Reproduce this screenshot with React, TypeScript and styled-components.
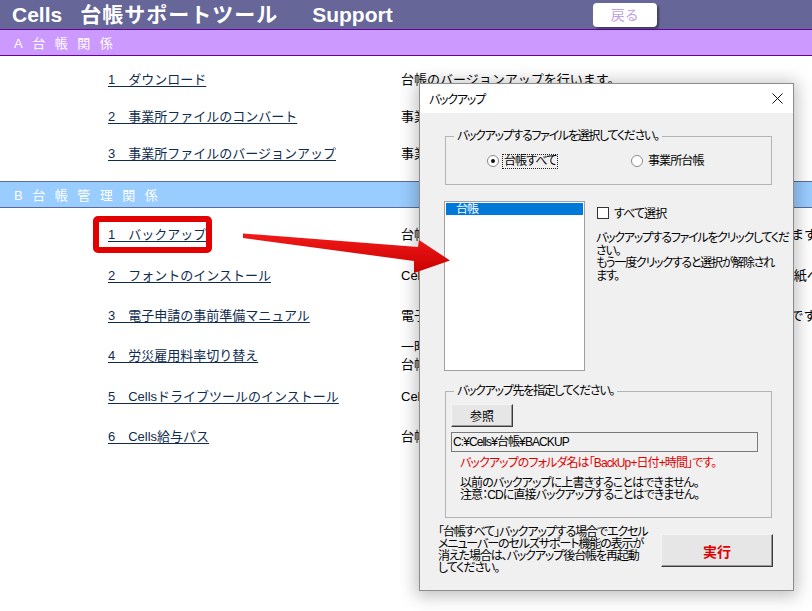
import React from "react";
import styled, { createGlobalStyle, css } from "styled-components";

const UI = `"Liberation Sans", "Noto Sans CJK JP", sans-serif`;

const GlobalStyle = createGlobalStyle`
  html, body { margin: 0; padding: 0; background: #fff; }
  body { width: 812px; height: 611px; overflow: hidden; }
  #root { width: 812px; height: 611px; }
`;

const Page = styled.div`
  position: relative;
  width: 812px;
  height: 611px;
  overflow: hidden;
  background: #fff;
  font-family: ${UI};
`;

const Header = styled.header`
  height: 29px;
  box-sizing: border-box;
  background: #666699;
  display: flex;
  align-items: center;
  padding-left: 12px;
  color: #fff;
  font-weight: bold;
  font-size: 21px;
  line-height: 31px;
`;

const Brand = styled.span``;
const TitleJa = styled.span`
  margin-left: 18px;
  letter-spacing: 1px;
`;
const TitleEn = styled.span`
  margin-left: 34px;
`;

const BackButton = styled.button`
  margin-left: 200px;
  width: 64px;
  height: 24px;
  padding: 0;
  background: #fff;
  border: none;
  border-radius: 4px;
  box-shadow: 2px 2px 2px rgba(40, 40, 70, 0.65);
  color: #c0a2e6;
  font-family: ${UI};
  font-size: 14px;
  font-weight: normal;
  line-height: 24px;
`;

const SectionBar = styled.div<{ $tone: "a" | "b" }>`
  height: 27px;
  box-sizing: border-box;
  display: flex;
  align-items: center;
  padding-left: 14px;
  background: ${(p) => (p.$tone === "a" ? "#cc99ff" : "#99ccff")};
  border-top: 1px solid ${(p) => (p.$tone === "a" ? "#660099" : "#5f6a94")};
  border-bottom: 1px solid ${(p) => (p.$tone === "a" ? "#660099" : "#5f6a94")};
  color: #fff;
  font-size: 13px;
  letter-spacing: 9.5px;
`;

const List = styled.ul<{ $row: number; $top: number; $bottom: number }>`
  list-style: none;
  margin: 0;
  padding: ${(p) => p.$top}px 0 ${(p) => p.$bottom}px 108px;
  display: grid;
  grid-auto-rows: ${(p) => p.$row}px;
`;

const Row = styled.li`
  display: grid;
  grid-template-columns: 293px auto;
  align-items: center;
  white-space: nowrap;
`;

const MenuLink = styled.a<{ $marked?: boolean }>`
  position: relative;
  justify-self: start;
  color: #0f2c4e;
  text-decoration: underline;
  text-underline-offset: 2px;
  font-size: 13px;
  line-height: 18px;
  cursor: pointer;
  ${(p) =>
    p.$marked &&
    css`
      &::before {
        content: "";
        position: absolute;
        left: -15px;
        right: -6px;
        top: -10px;
        bottom: -9px;
        border: 6px solid #e30000;
        border-radius: 5px;
      }
    `}
`;

const Desc = styled.span`
  font-size: 13px;
  line-height: 18px;
  color: #000;
`;

/* ---------- dialog ---------- */

const Dialog = styled.section`
  position: absolute;
  left: 419px;
  top: 83px;
  width: 375px;
  height: 508px;
  box-sizing: border-box;
  border: 1px solid #8c8c8c;
  background: #f0f0f0;
  box-shadow: 0 2px 16px 3px rgba(0, 0, 0, 0.25);
  display: flex;
  flex-direction: column;
  font-family: ${UI};
  font-size: 12px;
  font-feature-settings: "palt";
  letter-spacing: -0.9px;
  color: #000;
`;

const TitleBar = styled.div`
  height: 29px;
  background: #fff;
  display: flex;
  align-items: center;
  justify-content: space-between;
  padding: 0 10px 0 9px;
  flex: none;
`;

const DialogTitle = styled.span`
  font-size: 12px;
  letter-spacing: -1.2px;
`;

const CloseIcon = styled.svg`
  width: 11px;
  height: 11px;
`;

const DialogBody = styled.div`
  display: flex;
  flex-direction: column;
  padding: 0 21px 0 25px;
`;

const Group = styled.fieldset<{ $h: number; $mt: number }>`
  margin: ${(p) => p.$mt}px 0 0;
  padding: 0;
  min-width: 0;
  height: ${(p) => p.$h}px;
  box-sizing: border-box;
  border: 1px solid #b4b4b4;
`;

const GroupTitle = styled.legend`
  margin-left: 8px;
  padding: 0 3px;
  font-size: 12px;
  line-height: 14px;
  letter-spacing: -1.3px;
`;

const RadioRow = styled.div`
  display: grid;
  grid-template-columns: 144px auto;
  padding: 11px 0 0 41px;
`;

const RadioOption = styled.label`
  display: flex;
  align-items: center;
  gap: 3px;
  height: 14px;
`;

const RadioDot = styled.span<{ $on?: boolean }>`
  position: relative;
  width: 12px;
  height: 12px;
  box-sizing: border-box;
  border-radius: 50%;
  border: 1px solid #8a8a8a;
  background: #fff;
  ${(p) =>
    p.$on &&
    css`
      &::after {
        content: "";
        position: absolute;
        left: 3px;
        top: 3px;
        width: 4px;
        height: 4px;
        border-radius: 50%;
        background: #111;
      }
    `}
`;

const FocusText = styled.span<{ $focus?: boolean }>`
  padding: 0 1px;
  line-height: 13px;
  border: 1px dotted ${(p) => (p.$focus ? "#222" : "transparent")};
`;

const PickRow = styled.div`
  display: flex;
  margin: 16px 0 0 -1px;
`;

const ListBox = styled.ul`
  width: 141px;
  height: 170px;
  box-sizing: border-box;
  margin: 0;
  padding: 1px;
  list-style: none;
  border: 1px solid #a0a0a0;
  background: #fff;
  flex: none;
`;

const ListItem = styled.li<{ $selected?: boolean }>`
  height: 12px;
  line-height: 12px;
  padding-left: 10px;
  background: ${(p) => (p.$selected ? "#0078d7" : "transparent")};
  color: ${(p) => (p.$selected ? "#fff" : "#000")};
`;

const SideColumn = styled.div`
  margin-left: 11px;
  width: 176px;
  display: flex;
  flex-direction: column;
`;

const CheckRow = styled.label`
  display: flex;
  align-items: center;
  gap: 5px;
  margin: 5px 0 0 1px;
  height: 13px;
`;

const CheckBox = styled.span`
  width: 12px;
  height: 12px;
  box-sizing: border-box;
  border: 1px solid #333;
  background: #fff;
`;

const Hint = styled.p`
  margin: 13px 0 0;
  line-height: 12.5px;
  white-space: nowrap;
  letter-spacing: -1.25px;
`;

const DestContent = styled.div`
  display: flex;
  flex-direction: column;
  padding: 6px 0 0 5px;
`;

const ClassicButton = styled.button<{ $w: number; $h: number; $danger?: boolean }>`
  width: ${(p) => p.$w}px;
  height: ${(p) => p.$h}px;
  padding: 0;
  box-sizing: border-box;
  background: #e6e6e6;
  border: 1px solid;
  border-color: #f4f4f4 #3a3a3a #3a3a3a #f4f4f4;
  box-shadow: inset -1px -1px 0 #9a9a9a;
  font-family: ${UI};
  font-feature-settings: "palt";
  font-size: ${(p) => (p.$danger ? "14px" : "12px")};
  font-weight: ${(p) => (p.$danger ? "bold" : "normal")};
  color: ${(p) => (p.$danger ? "#e00000" : "#000")};
  flex: none;
`;

const PathField = styled.div`
  margin-top: 5px;
  width: 307px;
  height: 20px;
  box-sizing: border-box;
  border: 1px solid #7a7a7a;
  padding-left: 1px;
  line-height: 18px;
  background: #f0f0f0;
`;

const Note = styled.p<{ $red?: boolean; $mt: number }>`
  margin: ${(p) => p.$mt}px 0 0 9px;
  line-height: 12px;
  color: ${(p) => (p.$red ? "#e00000" : "#000")};
  white-space: nowrap;
`;

const FooterRow = styled.div`
  display: flex;
  align-items: flex-start;
  justify-content: space-between;
  margin: 8px -1px 0 -7px;
`;

const FooterNote = styled.p`
  margin: 0;
  width: 210px;
  line-height: 12px;
  white-space: nowrap;
  letter-spacing: -1.1px;
`;

const FooterButtonWrap = styled.div`
  margin-top: 8px;
`;

const ArrowLayer = styled.svg`
  position: absolute;
  left: 0;
  top: 0;
  width: 812px;
  height: 611px;
  pointer-events: none;
`;

const groupA = [
  { label: "1　ダウンロード", desc: "台帳のバージョンアップを行います。" },
  { label: "2　事業所ファイルのコンバート", desc: "事業所ファイルを新しい形式にコンバートします。" },
  { label: "3　事業所ファイルのバージョンアップ", desc: "事業所ファイルのバージョンアップを行います。" },
];

const groupB: { label: string; desc: React.ReactNode; marked?: boolean }[] = [
  { label: "1　バックアップ", desc: "台帳と事業所ファイルを指定したフォルダへ一括でバックアップします。", marked: true },
  { label: "2　フォントのインストール", desc: "Cellsで使用するフォントをインストールし、各種帳票をそのまま白紙へ印刷します。" },
  { label: "3　電子申請の事前準備マニュアル", desc: "電子申請を行うための事前準備の手順を詳しくまとめたマニュアルです。" },
  {
    label: "4　労災雇用料率切り替え",
    desc: (
      <>
        一時的に労災保険・雇用保険の料率を切り替えます。
        <br />
        台帳の料率は変更されません。
      </>
    ),
  },
  { label: "5　Cellsドライブツールのインストール", desc: "Cellsドライブツールをインストールします。" },
  { label: "6　Cells給与パス", desc: "台帳からCells給与へデータを渡します。" },
];

export default function App() {
  return (
    <>
      <GlobalStyle />
      <Page>
        <Header>
          <Brand>Cells</Brand>
          <TitleJa>台帳サポートツール</TitleJa>
          <TitleEn>Support</TitleEn>
          <BackButton>戻る</BackButton>
        </Header>

        <SectionBar $tone="a">A台帳関係</SectionBar>
        <List $row={37} $top={5} $bottom={9}>
          {groupA.map((r) => (
            <Row key={r.label}>
              <MenuLink>{r.label}</MenuLink>
              <Desc>{r.desc}</Desc>
            </Row>
          ))}
        </List>

        <SectionBar $tone="b">B台帳管理関係</SectionBar>
        <List $row={40.4} $top={7} $bottom={0}>
          {groupB.map((r) => (
            <Row key={r.label}>
              <MenuLink $marked={r.marked}>{r.label}</MenuLink>
              <Desc>{r.desc}</Desc>
            </Row>
          ))}
        </List>

        <Dialog>
          <TitleBar>
            <DialogTitle>バックアップ</DialogTitle>
            <CloseIcon viewBox="0 0 11 11">
              <path d="M0.5 0.5 L10.5 10.5 M10.5 0.5 L0.5 10.5" stroke="#111" strokeWidth="1" fill="none" />
            </CloseIcon>
          </TitleBar>
          <DialogBody>
            <Group $h={56} $mt={16}>
              <GroupTitle>バックアップするファイルを選択してください。</GroupTitle>
              <RadioRow>
                <RadioOption>
                  <RadioDot $on />
                  <FocusText $focus>台帳すべて</FocusText>
                </RadioOption>
                <RadioOption>
                  <RadioDot />
                  <FocusText>事業所台帳</FocusText>
                </RadioOption>
              </RadioRow>
            </Group>

            <PickRow>
              <ListBox>
                <ListItem $selected>台帳</ListItem>
              </ListBox>
              <SideColumn>
                <CheckRow>
                  <CheckBox />
                  すべて選択
                </CheckRow>
                <Hint>
                  バックアップするファイルをクリックしてくだ
                  <br />
                  さい。
                  <br />
                  もう一度クリックすると選択が解除され
                  <br />
                  ます。
                </Hint>
              </SideColumn>
            </PickRow>

            <Group $h={134} $mt={13}>
              <GroupTitle>バックアップ先を指定してください。</GroupTitle>
              <DestContent>
                <ClassicButton $w={62} $h={23}>参照</ClassicButton>
                <PathField>C:¥Cells¥台帳¥BACKUP</PathField>
                <Note $red $mt={5}>バックアップのフォルダ名は「BackUp+日付+時間」です。</Note>
                <Note $mt={8}>
                  以前のバックアップに上書きすることはできません。
                  <br />
                  注意：CDに直接バックアップすることはできません。
                </Note>
              </DestContent>
            </Group>

            <FooterRow>
              <FooterNote>
                「台帳すべて」バックアップする場合でエクセル
                <br />
                メニューバーのセルズサポート機能の表示が
                <br />
                消えた場合は、バックアップ後台帳を再起動
                <br />
                してください。
              </FooterNote>
              <FooterButtonWrap>
                <ClassicButton $w={112} $h={33} $danger>実行</ClassicButton>
              </FooterButtonWrap>
            </FooterRow>
          </DialogBody>
        </Dialog>

        <ArrowLayer viewBox="0 0 812 611">
          <defs>
            <linearGradient id="arrowFill" x1="0" y1="0" x2="0" y2="1">
              <stop offset="0" stopColor="#f21a1a" />
              <stop offset="1" stopColor="#c90000" />
            </linearGradient>
          </defs>
          <polygon
            points="243,233.5 418,247 419,240 450,260.5 414,273 414,261 243,238"
            fill="url(#arrowFill)"
          />
        </ArrowLayer>
      </Page>
    </>
  );
}
